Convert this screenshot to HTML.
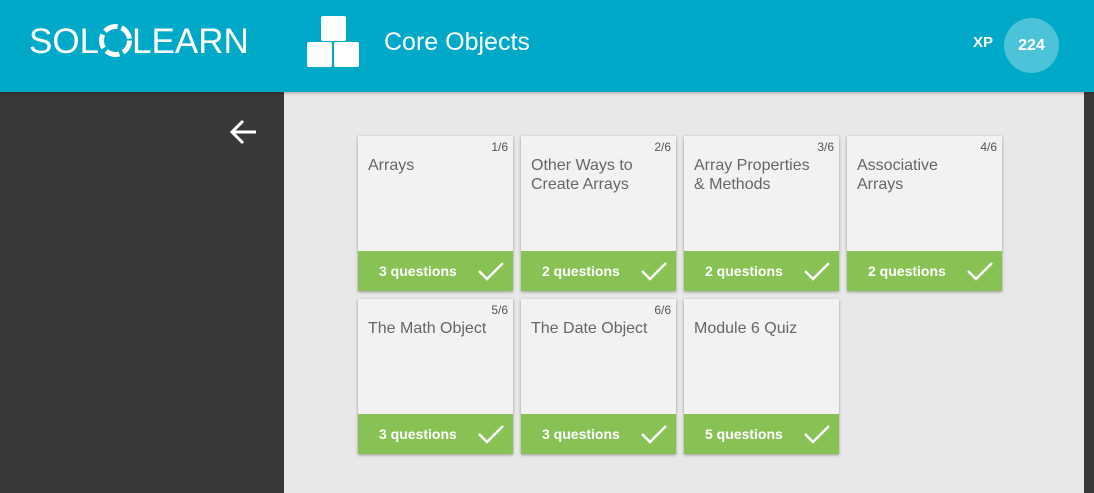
<!DOCTYPE html>
<html><head><meta charset="utf-8"><style>
body{margin:0;width:1094px;height:493px;overflow:hidden;background:#393939;font-family:"Liberation Sans",sans-serif;position:relative}
.hdr{position:absolute;left:0;top:0;width:1094px;height:92px;background:#00a9c8;box-shadow:0 1px 3px rgba(0,0,0,.3);z-index:2}
.logo{position:absolute;left:29px;top:22px;color:#fff;font-size:35px;letter-spacing:0px;line-height:40px}
.title{position:absolute;left:384px;top:28px;color:#fff;font-size:25px}
.xp{position:absolute;left:973px;top:34px;color:#fff;font-size:15px;font-weight:bold}
.circ{position:absolute;left:1004px;top:18px;width:55px;height:55px;border-radius:50%;background:#4cc3d9;color:#fff;font-weight:bold;font-size:16px;text-align:center;line-height:55px}
.main{position:absolute;left:284px;top:92px;width:800px;height:401px;background:#e8e8e8}
.card{position:absolute;width:155px;height:155px;background:#f2f2f2;box-shadow:0 1px 3px rgba(0,0,0,.35)}
.card .n{position:absolute;right:5px;top:4px;font-size:12px;color:#555}
.card .t{position:absolute;left:10px;top:20px;font-size:16px;color:#666;line-height:19px;width:140px;white-space:nowrap}
.card .f{position:absolute;left:0;bottom:0;width:155px;height:40px;background:#88c255;color:#fff;font-weight:bold;font-size:14px}
.card .f span{position:absolute;left:21px;top:12px}
.card .f svg{position:absolute;right:8px;top:9px}
</style></head><body>
<div class="hdr">
<div class="logo">SOL<svg width="33" height="33" viewBox="0 0 33 33" style="vertical-align:-4px"><circle cx="16.5" cy="16.5" r="14" fill="none" stroke="#fff" stroke-width="5" stroke-dasharray="14 4"/><circle cx="16.5" cy="16.5" r="5" fill="#00a9c8"/></svg>LEARN</div>
<svg style="position:absolute;left:307px;top:16px" width="54" height="52"><rect x="14" y="0" width="25" height="25" rx="2" fill="#fff"/><rect x="0" y="26" width="25" height="25" rx="2" fill="#fff"/><rect x="27" y="26" width="25" height="25" rx="2" fill="#fff"/></svg>
<div class="title">Core Objects</div>
<div class="xp">XP</div><div class="circ">224</div>
</div>
<svg style="position:absolute;left:230px;top:119px" width="28" height="26"><path d="M26 13H3M13 2L2 13l11 11" stroke="#fff" stroke-width="3" fill="none"/></svg>
<div class="main"></div>
<div class="card" style="left:358px;top:136px"><div class="n">1/6</div><div class="t">Arrays</div><div class="f"><span>3 questions</span><svg width="28" height="22"><path d="M2 11l8 8L26 3" stroke="#fff" stroke-width="2.5" fill="none"/></svg></div></div>
<div class="card" style="left:521px;top:136px"><div class="n">2/6</div><div class="t">Other Ways to<br>Create Arrays</div><div class="f"><span>2 questions</span><svg width="28" height="22"><path d="M2 11l8 8L26 3" stroke="#fff" stroke-width="2.5" fill="none"/></svg></div></div>
<div class="card" style="left:684px;top:136px"><div class="n">3/6</div><div class="t">Array Properties<br>&amp; Methods</div><div class="f"><span>2 questions</span><svg width="28" height="22"><path d="M2 11l8 8L26 3" stroke="#fff" stroke-width="2.5" fill="none"/></svg></div></div>
<div class="card" style="left:847px;top:136px"><div class="n">4/6</div><div class="t">Associative<br>Arrays</div><div class="f"><span>2 questions</span><svg width="28" height="22"><path d="M2 11l8 8L26 3" stroke="#fff" stroke-width="2.5" fill="none"/></svg></div></div>
<div class="card" style="left:358px;top:299px"><div class="n">5/6</div><div class="t">The Math Object</div><div class="f"><span>3 questions</span><svg width="28" height="22"><path d="M2 11l8 8L26 3" stroke="#fff" stroke-width="2.5" fill="none"/></svg></div></div>
<div class="card" style="left:521px;top:299px"><div class="n">6/6</div><div class="t">The Date Object</div><div class="f"><span>3 questions</span><svg width="28" height="22"><path d="M2 11l8 8L26 3" stroke="#fff" stroke-width="2.5" fill="none"/></svg></div></div>
<div class="card" style="left:684px;top:299px"><div class="t">Module 6 Quiz</div><div class="f"><span>5 questions</span><svg width="28" height="22"><path d="M2 11l8 8L26 3" stroke="#fff" stroke-width="2.5" fill="none"/></svg></div></div>
</body></html>
